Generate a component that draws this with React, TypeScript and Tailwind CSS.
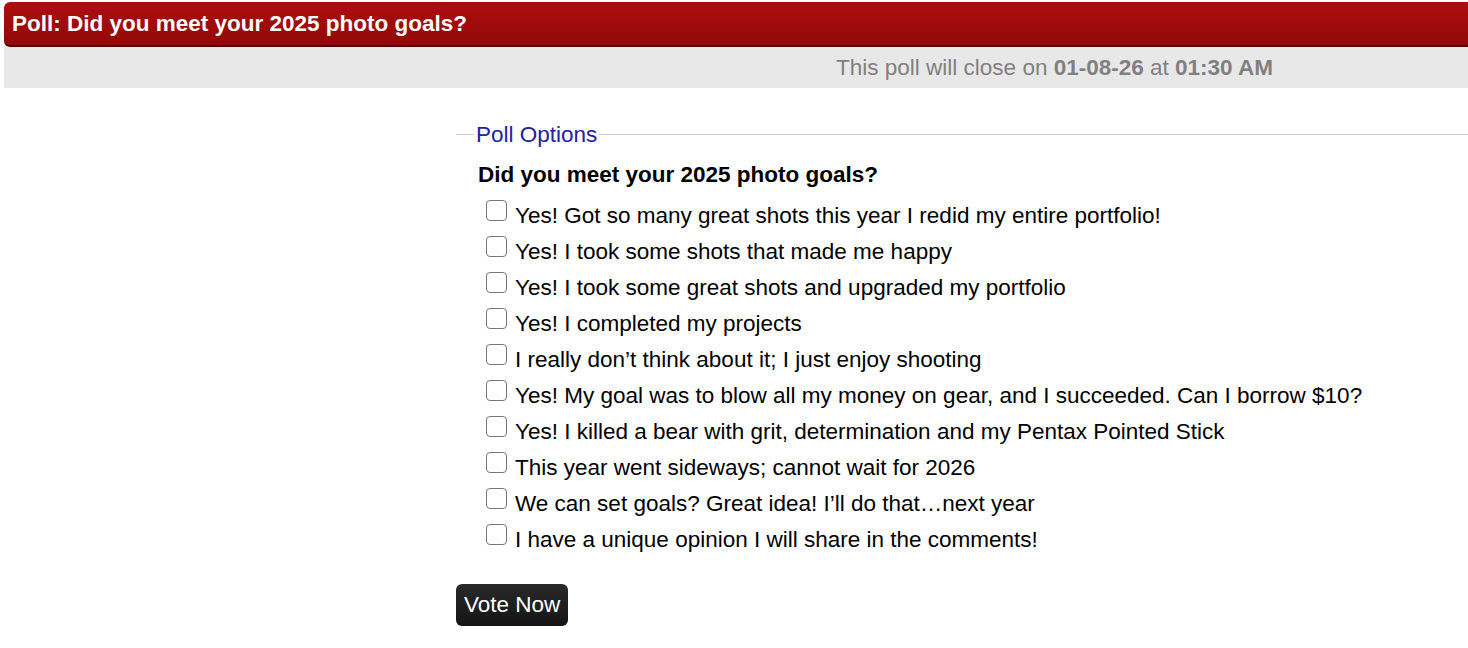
const options = [
  "Yes! Got so many great shots this year I redid my entire portfolio!",
  "Yes! I took some shots that made me happy",
  "Yes! I took some great shots and upgraded my portfolio",
  "Yes! I completed my projects",
  "I really don\u2019t think about it; I just enjoy shooting",
  "Yes! My goal was to blow all my money on gear, and I succeeded. Can I borrow $10?",
  "Yes! I killed a bear with grit, determination and my Pentax Pointed Stick",
  "This year went sideways; cannot wait for 2026",
  "We can set goals? Great idea! I\u2019ll do that\u2026next year",
  "I have a unique opinion I will share in the comments!",
];

export default function App() {
  return (
    <div className="min-h-screen bg-white font-['Liberation_Sans',Arial,sans-serif] pl-1 pt-[2px]">
      <div className="flex h-[45px] items-center rounded-tl-[6px] rounded-bl-[6px] border-b-2 border-[#4a0000] bg-gradient-to-b from-[#ad0e0e] to-[#930808] px-2">
        <h1 className="text-[22.5px] font-bold text-white">Poll: Did you meet your 2025 photo goals?</h1>
      </div>
      <div className="flex h-[41px] items-center justify-end bg-[#e8e8e8] pr-[195px] text-[22.5px] text-[#808080]">
        <span>
          This poll will close on <b>01-08-26</b> at <b>01:30 AM</b>
        </span>
      </div>

      <form className="ml-[452px] mt-[30px]">
        <fieldset className="border-t border-[#cccccc] pl-[20px]">
          <legend className="-ml-[2px] px-[2px] text-[22.5px] text-[#23239b]">Poll Options</legend>
          <div className="mt-[6px] pl-[2px] text-[22.5px] font-bold text-black">Did you meet your 2025 photo goals?</div>
          <ul className="mt-[6px]">
            {options.map((o) => (
              <li key={o} className="flex h-[36px] items-center text-[22.5px] text-black">
                <span className="ml-[10px] mr-[8px] -mt-[11px] inline-block h-[21px] w-[21px] rounded-[4px] border border-[#767676] bg-white" />
                {o}
              </li>
            ))}
          </ul>
        </fieldset>
        <button
          type="button"
          className="mt-[26px] h-[42px] rounded-[6px] bg-gradient-to-b from-[#2a2a2a] to-[#151515] px-[8px] text-[22.5px] text-white"
        >
          Vote Now
        </button>
      </form>
    </div>
  );
}
